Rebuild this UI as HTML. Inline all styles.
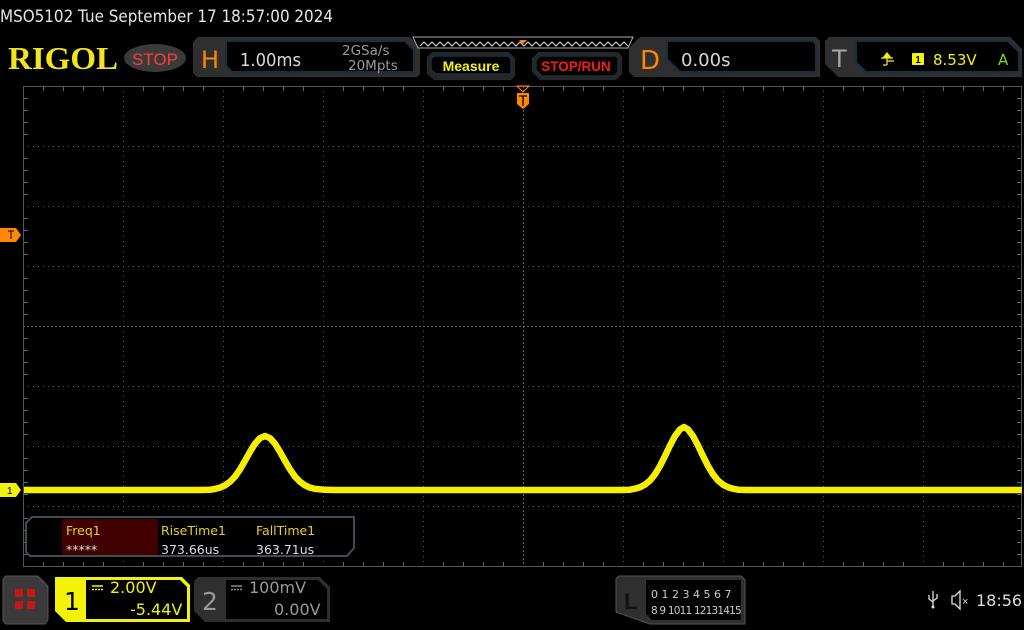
<!DOCTYPE html>
<html><head><meta charset="utf-8"><style>
html,body{margin:0;padding:0;background:#000;width:1024px;height:630px;overflow:hidden}
svg{display:block;font-family:"Liberation Sans","DejaVu Sans",sans-serif}
</style></head><body>
<svg width="1024" height="630" viewBox="0 0 1024 630" xmlns="http://www.w3.org/2000/svg">
<rect width="1024" height="630" fill="#000"/>
<text x="0" y="22" font-size="16.5" fill="#e6e6e6" textLength="333" lengthAdjust="spacingAndGlyphs" style="font-family:'DejaVu Sans',sans-serif">MSO5102  Tue September 17 18:57:00 2024</text>
<!-- RIGOL logo -->
<text x="8" y="69" font-size="32" font-weight="bold" fill="#f2e51a" textLength="110" lengthAdjust="spacingAndGlyphs" style="font-family:'Liberation Serif',serif">RIGOL</text>
<ellipse cx="155" cy="58" rx="31" ry="14" fill="#3a3a3a"/>
<text x="155" y="65" font-size="17" fill="#ff3b3b" text-anchor="middle">STOP</text>
<!-- H panel -->
<path d="M198 37 H410 L420 47 V74 L417 77 H197 L193 73 V42 Z" fill="#2f2f2f"/>
<path d="M226 41 H405 L414 50 V72 H232 L226 66 Z" fill="#000" stroke="#17303d" stroke-width="2"/>
<text x="201" y="68" font-size="24" fill="#ff8800" style="font-family:'DejaVu Sans',sans-serif">H</text>
<text x="240" y="66" font-size="18" fill="#d8d8d8" textLength="61" lengthAdjust="spacingAndGlyphs" style="font-family:'DejaVu Sans',sans-serif">1.00ms</text>
<text x="342" y="55" font-size="13.5" fill="#9a9a9a" style="font-family:'DejaVu Sans',sans-serif">2GSa/s</text>
<text x="348" y="70" font-size="13.5" fill="#9a9a9a" style="font-family:'DejaVu Sans',sans-serif">20Mpts</text>
<!-- top timeline -->
<path d="M413 37 H633 L628 48 H418 Z" fill="#000" stroke="#aaa" stroke-width="1"/>
<polyline points="420,46 424,42 428,46 432,42 436,46 440,42 444,46 448,42 452,46 456,42 460,46 464,42 468,46 472,42 476,46 480,42 484,46 488,42 492,46 496,42 500,46 504,42 508,46 512,42 516,46 520,42 524,46 528,42 532,46 536,42 540,46 544,42 548,46 552,42 556,46 560,42 564,46 568,42 572,46 576,42 580,46 584,42 588,46 592,42 596,46 600,42 604,46 608,42 612,46 616,42 620,46 624,42 628,46" fill="none" stroke="#ddd" stroke-width="1"/>
<path d="M519 40 H527 L523 44 Z" fill="#ff8800"/>
<!-- Measure -->
<path d="M432 52 H509 L515 58 V76 L511 80 H434 L427 74 V57 Z" fill="#262626"/>
<path d="M434 56 H508 L511 59 V74 H436 L431 70 V59 Z" fill="#000" stroke="#17303d" stroke-width="1.5"/>
<text x="471" y="71" font-size="14" font-weight="bold" fill="#f2f20a" text-anchor="middle">Measure</text>
<!-- STOP/RUN -->
<path d="M538 52 H618 L622 56 V74 L616 80 H540 L532 72 V58 Z" fill="#262626"/>
<path d="M540 56 H616 L618 58 V72 L614 76 H542 L536 70 V60 Z" fill="#000" stroke="#17303d" stroke-width="1.5"/>
<text x="576" y="71" font-size="13.5" font-weight="bold" fill="#ff1818" text-anchor="middle">STOP/RUN</text>
<!-- D panel -->
<path d="M640 37 H816 L820 41 V77 H634 L629 72 V48 Z" fill="#2f2f2f"/>
<path d="M667 41 H813 L816 44 V72 H680 L667 59 Z" fill="#000" stroke="#17303d" stroke-width="2"/>
<text x="640" y="69" font-size="26" fill="#ff8800" style="font-family:'DejaVu Sans',sans-serif">D</text>
<text x="681" y="66" font-size="18" fill="#d8d8d8" style="font-family:'DejaVu Sans',sans-serif">0.00s</text>
<!-- T panel -->
<path d="M829 37 H1010 L1022 49 V77 H838 L825 64 V41 Z" fill="#2f2f2f"/>
<path d="M856 41 H1008 L1019 52 V72 H866 L856 62 Z" fill="#000" stroke="#17303d" stroke-width="2"/>
<text x="832" y="67" font-size="24" fill="#a8a8a8" style="font-family:'DejaVu Sans',sans-serif">T</text>
<path d="M883 58 L887 53 L891 58 Z M887 58 V65 M883 65 H887 M887 61 H894 M881 58 H893" fill="#f2f20a" stroke="#f2f20a" stroke-width="1.2"/>
<rect x="912" y="53" width="12" height="12" rx="1" fill="#f2f20a"/>
<text x="918" y="63" font-size="10" font-weight="bold" fill="#000" text-anchor="middle">1</text>
<text x="933" y="65" font-size="15" fill="#f2f20a" style="font-family:'DejaVu Sans',sans-serif">8.53V</text>
<text x="998" y="65" font-size="15" fill="#7ee000" style="font-family:'DejaVu Sans',sans-serif">A</text>
<!-- grid -->
<g stroke="#5a5a5a" stroke-width="1" stroke-dasharray="1,4">
<line x1="123.5" y1="86" x2="123.5" y2="566"/><line x1="223.5" y1="86" x2="223.5" y2="566"/>
<line x1="323.5" y1="86" x2="323.5" y2="566"/><line x1="423.5" y1="86" x2="423.5" y2="566"/>
<line x1="623.5" y1="86" x2="623.5" y2="566"/><line x1="723.5" y1="86" x2="723.5" y2="566"/>
<line x1="823.5" y1="86" x2="823.5" y2="566"/><line x1="923.5" y1="86" x2="923.5" y2="566"/>
<line x1="23" y1="146.5" x2="1022" y2="146.5"/><line x1="23" y1="206.5" x2="1022" y2="206.5"/>
<line x1="23" y1="266.5" x2="1022" y2="266.5"/><line x1="23" y1="386.5" x2="1022" y2="386.5"/>
<line x1="23" y1="446.5" x2="1022" y2="446.5"/><line x1="23" y1="506.5" x2="1022" y2="506.5"/>
</g>
<g stroke="#666" stroke-width="1">
<line x1="523.5" y1="86" x2="523.5" y2="566" stroke-dasharray="2,2"/>
<line x1="23" y1="326.5" x2="1022" y2="326.5" stroke-dasharray="2,2"/>
<rect x="23.5" y="86.5" width="998" height="480" fill="none" stroke="#555"/>
</g>
<g stroke="#666" stroke-width="1">
<path d="M43.5 87v4M63.5 87v4M83.5 87v4M103.5 87v4M143.5 87v4M163.5 87v4M183.5 87v4M203.5 87v4M243.5 87v4M263.5 87v4M283.5 87v4M303.5 87v4M343.5 87v4M363.5 87v4M383.5 87v4M403.5 87v4M443.5 87v4M463.5 87v4M483.5 87v4M503.5 87v4M543.5 87v4M563.5 87v4M583.5 87v4M603.5 87v4M643.5 87v4M663.5 87v4M683.5 87v4M703.5 87v4M743.5 87v4M763.5 87v4M783.5 87v4M803.5 87v4M843.5 87v4M863.5 87v4M883.5 87v4M903.5 87v4M943.5 87v4M963.5 87v4M983.5 87v4M1003.5 87v4"/>
<path d="M43.5 566v-4M63.5 566v-4M83.5 566v-4M103.5 566v-4M143.5 566v-4M163.5 566v-4M183.5 566v-4M203.5 566v-4M243.5 566v-4M263.5 566v-4M283.5 566v-4M303.5 566v-4M343.5 566v-4M363.5 566v-4M383.5 566v-4M403.5 566v-4M443.5 566v-4M463.5 566v-4M483.5 566v-4M503.5 566v-4M543.5 566v-4M563.5 566v-4M583.5 566v-4M603.5 566v-4M643.5 566v-4M663.5 566v-4M683.5 566v-4M703.5 566v-4M743.5 566v-4M763.5 566v-4M783.5 566v-4M803.5 566v-4M843.5 566v-4M863.5 566v-4M883.5 566v-4M903.5 566v-4M943.5 566v-4M963.5 566v-4M983.5 566v-4M1003.5 566v-4"/>
<path d="M24 98.5h4M24 110.5h4M24 122.5h4M24 134.5h4M24 158.5h4M24 170.5h4M24 182.5h4M24 194.5h4M24 218.5h4M24 230.5h4M24 242.5h4M24 254.5h4M24 278.5h4M24 290.5h4M24 302.5h4M24 314.5h4M24 338.5h4M24 350.5h4M24 362.5h4M24 374.5h4M24 398.5h4M24 410.5h4M24 422.5h4M24 434.5h4M24 458.5h4M24 470.5h4M24 482.5h4M24 494.5h4M24 518.5h4M24 530.5h4M24 542.5h4M24 554.5h4"/>
<path d="M1021 98.5h-4M1021 110.5h-4M1021 122.5h-4M1021 134.5h-4M1021 158.5h-4M1021 170.5h-4M1021 182.5h-4M1021 194.5h-4M1021 218.5h-4M1021 230.5h-4M1021 242.5h-4M1021 254.5h-4M1021 278.5h-4M1021 290.5h-4M1021 302.5h-4M1021 314.5h-4M1021 338.5h-4M1021 350.5h-4M1021 362.5h-4M1021 374.5h-4M1021 398.5h-4M1021 410.5h-4M1021 422.5h-4M1021 434.5h-4M1021 458.5h-4M1021 470.5h-4M1021 482.5h-4M1021 494.5h-4M1021 518.5h-4M1021 530.5h-4M1021 542.5h-4M1021 554.5h-4"/>
</g>
<!-- trigger markers -->
<path d="M517 86 H529 L523 92 Z" fill="none" stroke="#ff8800"/>
<path d="M517 93 H529 V104 L523 109 L517 104 Z" fill="#ff8800"/>
<path d="M519 96 H527 M523 96 V106" stroke="#000" stroke-width="1.3"/>
<path d="M0 228 H16 L21 235 L16 242 H0 Z" fill="#ff8800"/>
<path d="M8 231 H14 M11 231 V239" stroke="#000" stroke-width="1"/>
<path d="M0 483 H16 L21 490 L16 497 H0 Z" fill="#f2f20a"/>
<text x="7" y="494" font-size="10" fill="#000">1</text>
<!-- waveform -->
<path d="M24 490 L200 490 L210 489.8 L215 488.9 L220 487.6 L225 485.4 L230 481.8 L235 476.6 L240 469.4 L245 460.8 L250 451.8 L255 443.7 L260 438.1 L265 436 L270 438.1 L275 443.7 L280 451.8 L285 460.8 L290 469.4 L295 476.6 L300 481.8 L305 485.4 L310 487.6 L315 488.9 L325 489.8 L335 490 L620 490 L630 489.7 L635 488.7 L640 487.2 L645 484.6 L650 480.5 L655 474.3 L660 466 L665 456 L670 445.5 L675 436 L680 429.4 L684 427 L688 429.4 L693 436 L698 445.5 L703 456 L708 466 L713 474.3 L718 480.5 L723 484.6 L728 487.2 L733 488.7 L738 489.7 L748 490 L1022 490" fill="none" stroke="#f6f000" stroke-width="6.5" stroke-linejoin="round"/>
<!-- measure panel -->
<path d="M32 517 H354 V548 L347 556 H30 L26 552 V523 Z" fill="#000" stroke="#3e4e55" stroke-width="2"/>
<rect x="62" y="519" width="96" height="36" fill="#400000"/>
<text x="66" y="535" font-size="12.5" fill="#e8d020" style="font-family:'DejaVu Sans',sans-serif">Freq1</text>
<text x="66" y="554" font-size="12.5" fill="#ddd" style="font-family:'DejaVu Sans',sans-serif">*****</text>
<text x="161" y="535" font-size="12.5" fill="#e8d020" style="font-family:'DejaVu Sans',sans-serif">RiseTime1</text>
<text x="161" y="554" font-size="12.5" fill="#ddd" style="font-family:'DejaVu Sans',sans-serif">373.66us</text>
<text x="256" y="535" font-size="12.5" fill="#e8d020" style="font-family:'DejaVu Sans',sans-serif">FallTime1</text>
<text x="256" y="554" font-size="12.5" fill="#ddd" style="font-family:'DejaVu Sans',sans-serif">363.71us</text>
<!-- menu button -->
<path d="M6 576 H38 L48 586 V620 L45 624 H6 L3 621 V579 Z" fill="#3a3a3a" stroke="#555"/>
<rect x="15" y="589" width="8" height="8" fill="#c41818"/><rect x="27" y="589" width="8" height="8" fill="#c41818"/>
<rect x="15" y="601" width="8" height="8" fill="#c41818"/><rect x="27" y="601" width="8" height="8" fill="#c41818"/>
<!-- ch1 -->
<path d="M55 577 H182 L190 585 V622 H66 L55 611 Z" fill="#f2f20a"/>
<path d="M86 580 H180 L187 587 V619 H86 Z" fill="#000"/>
<text x="64" y="610" font-size="25" fill="#000" style="font-family:'DejaVu Sans',sans-serif">1</text>
<path d="M92 586 H103" stroke="#f2f20a" stroke-width="1.5"/><path d="M92 589.5 H103" stroke="#f2f20a" stroke-width="1.5" stroke-dasharray="2,1"/>
<text x="110" y="593" font-size="16" fill="#f2f20a" style="font-family:'DejaVu Sans',sans-serif">2.00V</text>
<text x="130" y="615" font-size="16" fill="#f2f20a" style="font-family:'DejaVu Sans',sans-serif">-5.44V</text>
<!-- ch2 -->
<path d="M198 577 H320 L330 587 V622 H205 L194 611 V581 Z" fill="#2f2f2f"/>
<path d="M226 580 H318 L327 589 V619 H226 Z" fill="#000"/>
<text x="202" y="610" font-size="25" fill="#9a9a9a" style="font-family:'DejaVu Sans',sans-serif">2</text>
<path d="M231 586 H242" stroke="#888" stroke-width="1.5"/><path d="M231 589.5 H242" stroke="#888" stroke-width="1.5" stroke-dasharray="2,1"/>
<text x="249" y="593" font-size="16" fill="#9a9a9a" style="font-family:'DejaVu Sans',sans-serif">100mV</text>
<text x="274" y="615" font-size="16" fill="#9a9a9a" style="font-family:'DejaVu Sans',sans-serif">0.00V</text>
<!-- L panel -->
<path d="M619 576 H741 L745 580 V624 H650 L616 612 V579 Z" fill="#2f2f2f" stroke="#555"/>
<path d="M646 580 H741 V620 H652 L646 614 Z" fill="#000"/>
<text x="624" y="609" font-size="22" font-weight="bold" fill="#111">L</text>
<text x="651" y="598" font-size="11" fill="#ccc" style="font-family:'DejaVu Sans',sans-serif">0 1 2 3  4 5 6 7</text>
<text x="651" y="614" font-size="10.5" fill="#ccc" letter-spacing="-0.8" style="font-family:'DejaVu Sans',sans-serif">8 9 1011 12131415</text>
<!-- status -->
<path d="M933 591 V607 M929 595 L929 599 L933 602 M937 594 V598 L933 601" fill="none" stroke="#ddd" stroke-width="1.3"/>
<circle cx="933" cy="607" r="1.5" fill="#ddd"/>
<path d="M952 596 H955 L960 591 V609 L955 604 H952 Z" fill="none" stroke="#ddd" stroke-width="1.3"/>
<text x="962" y="605" font-size="11" fill="#ddd">×</text>
<text x="976" y="606" font-size="16" fill="#ddd" style="font-family:'DejaVu Sans',sans-serif">18:56</text>
</svg>
</body></html>
